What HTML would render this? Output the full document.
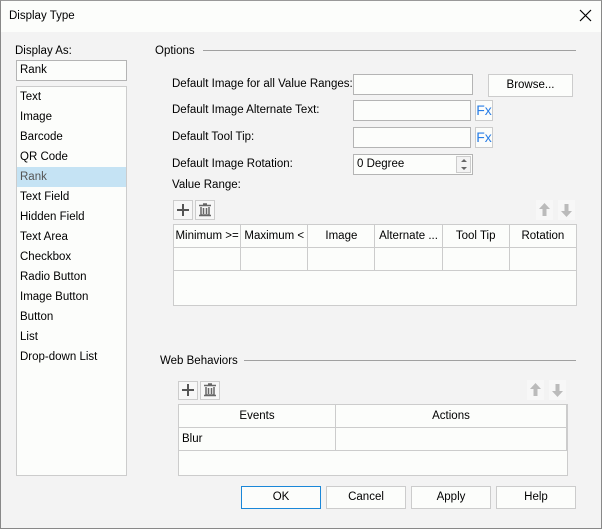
<!DOCTYPE html>
<html><head><style>
*{box-sizing:border-box;margin:0;padding:0}
body{width:602px;height:529px;background:#f3f3f3;font-family:"Liberation Sans",sans-serif;font-size:11.5px;color:#000;position:relative;overflow:hidden}
.a{position:absolute}
.win{left:0;top:0;width:602px;height:529px;border:1px solid #888;border-top:1px solid #999}
.title{left:1px;top:1px;width:600px;height:31px;background:#fcfdfb}
.t{position:absolute;white-space:nowrap;line-height:14px}
.box{position:absolute;background:#fcfdfb;border:1px solid #b4b4b4}
.btn{position:absolute;background:#fcfdfb;border:1px solid #ccc;text-align:center;line-height:20px}
.fx{position:absolute;border:1px solid #ccc;background:#fcfdfb;color:#2a7ee6;font-size:14px;text-align:center;line-height:18px}
.line{position:absolute;height:1px;background:#a0a0a0}
.ib{position:absolute;width:20px;height:20px;border:1px solid #ccc;background:#f7f7f7}
table{position:absolute;border-collapse:collapse;background:#fcfdfb}
td{border:1px solid #ccc;height:23px;text-align:center;white-space:nowrap;overflow:hidden;padding:0}
</style></head><body>
<div class="a title"></div>
<div class="a win"></div>
<div class="t" style="left:9px;top:9px">Display Type</div>
<svg class="a" style="left:579px;top:9px" width="13" height="13"><path d="M1 1L12 12M12 1L1 12" stroke="#000" stroke-width="1.2"/></svg>

<div class="t" style="left:15px;top:44px">Display As:</div>
<div class="box" style="left:16px;top:60px;width:111px;height:21px"></div>
<div class="t" style="left:20px;top:63px">Rank</div>
<div class="box" style="left:16px;top:86px;width:111px;height:390px;border-color:#ccc"></div>
<div class="a" style="left:17px;top:167px;width:109px;height:20px;background:#c5e3f4"></div>
<div class="t" style="left:20px;top:87px;line-height:20px">Text<br>Image<br>Barcode<br>QR Code<br><span style="color:#555">Rank</span><br>Text Field<br>Hidden Field<br>Text Area<br>Checkbox<br>Radio Button<br>Image Button<br>Button<br>List<br>Drop-down List</div>

<div class="t" style="left:155px;top:44px">Options</div>
<div class="line" style="left:203px;top:50px;width:373px"></div>
<div class="t" style="left:172px;top:77px">Default Image for all Value Ranges:</div>
<div class="t" style="left:172px;top:103px">Default Image Alternate Text:</div>
<div class="t" style="left:172px;top:130px">Default Tool Tip:</div>
<div class="t" style="left:172px;top:157px">Default Image Rotation:</div>
<div class="t" style="left:172px;top:178px">Value Range:</div>
<div class="box" style="left:353px;top:74px;width:120px;height:21px"></div>
<div class="btn" style="left:488px;top:74px;width:85px;height:23px">Browse...</div>
<div class="box" style="left:353px;top:100px;width:118px;height:21px"></div>
<div class="fx" style="left:475px;top:100px;width:18px;height:21px">Fx</div>
<div class="box" style="left:353px;top:127px;width:118px;height:21px"></div>
<div class="fx" style="left:475px;top:127px;width:18px;height:21px">Fx</div>
<div class="box" style="left:353px;top:154px;width:120px;height:21px"></div>
<div class="t" style="left:357px;top:157px">0 Degree</div>
<div class="a" style="left:456px;top:156px;width:15px;height:17px;border:1px solid #ccc;background:#f3f3f3"></div>
<svg class="a" style="left:459px;top:158px" width="10" height="14"><path d="M2 4L5 1L8 4ZM2 9L5 12L8 9Z" fill="#666"/></svg>

<div class="ib" style="left:173px;top:200px"></div>
<svg class="a" style="left:173px;top:200px" width="20" height="20"><path d="M4 10H16M10 4V16" stroke="#555" stroke-width="2"/></svg>
<div class="ib" style="left:195px;top:200px"></div>
<svg class="a" style="left:195px;top:200px" width="20" height="20"><path d="M4 5.5H16M8 4H12M6 7V15H14V7M8.5 8V14M11.5 8V14M4 15.5H16" stroke="#666" stroke-width="1.5" fill="none"/></svg>
<svg class="a" style="left:536px;top:200px" width="40" height="20"><rect x="0" y="0" width="17" height="20" fill="#f7f7f7"/><rect x="22" y="0" width="17" height="20" fill="#f7f7f7"/><path d="M8.5 3L3 9H6.5V16H10.5V9H14Z" fill="#bbb"/><path d="M30.5 17L25 11H28.5V4H32.5V11H36Z" fill="#bbb"/></svg>

<div class="box" style="left:173px;top:224px;width:404px;height:82px;border-color:#ccc"></div>
<table style="left:173px;top:224px;width:404px;table-layout:fixed">
<tr><td>Minimum &gt;=</td><td>Maximum &lt;</td><td>Image</td><td>Alternate ...</td><td>Tool Tip</td><td>Rotation</td></tr>
<tr><td style="height:22px"></td><td></td><td></td><td></td><td></td><td></td></tr>
</table>

<div class="t" style="left:160px;top:354px">Web Behaviors</div>
<div class="line" style="left:244px;top:360px;width:332px"></div>
<div class="ib" style="left:178px;top:381px;height:19px"></div>
<svg class="a" style="left:178px;top:380px" width="20" height="20"><path d="M4 10H16M10 4V16" stroke="#555" stroke-width="2"/></svg>
<div class="ib" style="left:200px;top:381px;height:19px"></div>
<svg class="a" style="left:200px;top:380px" width="20" height="20"><path d="M4 5.5H16M8 4H12M6 7V15H14V7M8.5 8V14M11.5 8V14M4 15.5H16" stroke="#666" stroke-width="1.5" fill="none"/></svg>
<svg class="a" style="left:527px;top:380px" width="40" height="20"><rect x="0" y="0" width="17" height="20" fill="#f7f7f7"/><rect x="22" y="0" width="17" height="20" fill="#f7f7f7"/><path d="M8.5 3L3 9H6.5V16H10.5V9H14Z" fill="#bbb"/><path d="M30.5 17L25 11H28.5V4H32.5V11H36Z" fill="#bbb"/></svg>

<div class="box" style="left:178px;top:404px;width:390px;height:72px;border-color:#ccc"></div>
<table style="left:178px;top:404px;width:389px;table-layout:fixed">
<col style="width:157px"><col>
<tr><td>Events</td><td>Actions</td></tr>
<tr><td style="text-align:left;padding-left:3px;height:22px">Blur</td><td></td></tr>
</table>

<div class="btn" style="left:241px;top:486px;width:80px;height:23px;border-color:#1a87d8">OK</div>
<div class="btn" style="left:326px;top:486px;width:80px;height:23px">Cancel</div>
<div class="btn" style="left:411px;top:486px;width:80px;height:23px">Apply</div>
<div class="btn" style="left:496px;top:486px;width:80px;height:23px">Help</div>
</body></html>
